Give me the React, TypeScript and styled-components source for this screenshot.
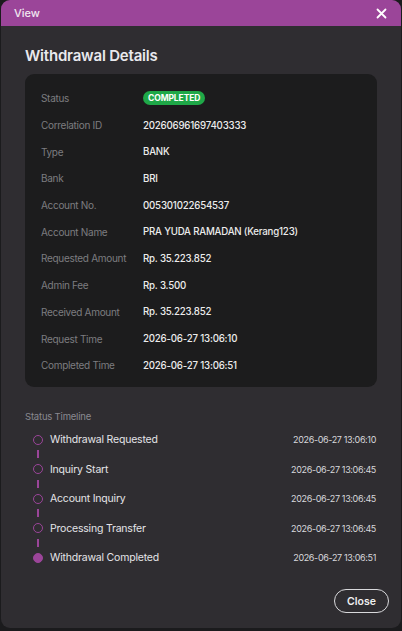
import styled, { createGlobalStyle } from 'styled-components';

const GlobalStyle = createGlobalStyle`
  html, body {
    margin: 0;
    padding: 0;
    background: #1b1b1d;
    font-family: Inter, "Noto Sans", sans-serif;
  }
  * { box-sizing: border-box; }
`;

const details: [string, string][] = [
  ['Correlation ID', '202606961697403333'],
  ['Type', 'BANK'],
  ['Bank', 'BRI'],
  ['Account No.', '005301022654537'],
  ['Account Name', 'PRA YUDA RAMADAN (Kerang123)'],
  ['Requested Amount', 'Rp. 35.223.852'],
  ['Admin Fee', 'Rp. 3.500'],
  ['Received Amount', 'Rp. 35.223.852'],
  ['Request Time', '2026-06-27 13:06:10'],
  ['Completed Time', '2026-06-27 13:06:51'],
];

const timeline = [
  { name: 'Withdrawal Requested', time: '2026-06-27 13:06:10' },
  { name: 'Inquiry Start', time: '2026-06-27 13:06:45' },
  { name: 'Account Inquiry', time: '2026-06-27 13:06:45' },
  { name: 'Processing Transfer', time: '2026-06-27 13:06:45' },
  { name: 'Withdrawal Completed', time: '2026-06-27 13:06:51', done: true },
];

export default function App() {
  return (
    <>
      <GlobalStyle />
      <Modal>
        <Header>
          <HeaderTitle>View</HeaderTitle>
          <CloseX aria-label="close">
            <svg width="11" height="11" viewBox="0 0 11 11">
              <path d="M1.5 1.5 L9.5 9.5 M9.5 1.5 L1.5 9.5" stroke="#fff" strokeWidth="1.8" strokeLinecap="round" />
            </svg>
          </CloseX>
        </Header>
        <Body>
          <Title>Withdrawal Details</Title>
          <Card>
            <Row>
              <Label>Status</Label>
              <Badge>COMPLETED</Badge>
            </Row>
            {details.map(([k, v]) => (
              <Row key={k}>
                <Label>{k}</Label>
                <Value>{v}</Value>
              </Row>
            ))}
          </Card>
          <SectionLabel>Status Timeline</SectionLabel>
          <Timeline>
            {timeline.map((t, i) => (
              <Step key={t.name}>
                <StepRow>
                  <Dot $filled={!!t.done} />
                  <StepName>{t.name}</StepName>
                  <StepTime>{t.time}</StepTime>
                </StepRow>
                {i < timeline.length - 1 && <Connector />}
              </Step>
            ))}
          </Timeline>
          <Footer>
            <CloseButton>Close</CloseButton>
          </Footer>
        </Body>
      </Modal>
    </>
  );
}

const Modal = styled.div`
  width: 400px;
  height: 628px;
  margin-left: 1px;
  background: #2f2d31;
  border-radius: 9px;
  overflow: hidden;
  display: flex;
  flex-direction: column;
`;

const Header = styled.div`
  height: 26px;
  background: #9b4599;
  display: flex;
  align-items: center;
  justify-content: space-between;
  padding: 0 14px 0 13px;
`;

const HeaderTitle = styled.span`
  color: #f1e6f0;
  font-size: 11px;
  font-weight: 500;
`;

const CloseX = styled.button`
  background: none;
  border: none;
  padding: 0;
  display: flex;
  cursor: pointer;
`;

const Body = styled.div`
  flex: 1;
  padding: 20px 24px 15px 24px;
  display: flex;
  flex-direction: column;
`;

const Title = styled.h2`
  margin: 0 0 9px 0;
  color: #e9e9ee;
  font-size: 15px;
  font-weight: 600;
  letter-spacing: -0.2px;
`;

const Card = styled.div`
  background: #1c1c1d;
  border-radius: 9px;
  padding: 11px 16px 8px 16px;
  width: 352px;
`;

const Row = styled.div`
  display: flex;
  align-items: center;
  height: 26.7px;
`;

const Label = styled.span`
  width: 102px;
  color: #7d7d80;
  font-size: 10px;
  letter-spacing: -0.3px;
`;

const Value = styled.span`
  color: #ececec;
  font-size: 9.7px;
  font-weight: 500;
  letter-spacing: -0.2px;
`;

const Badge = styled.span`
  background: #1fa848;
  color: #ffffff;
  font-size: 8.5px;
  font-weight: 700;
  padding: 2px 5px;
  border-radius: 7px;
  letter-spacing: -0.1px;
`;

const SectionLabel = styled.div`
  margin: 24px 0 0 0;
  color: #8a8990;
  font-size: 9.5px;
  letter-spacing: -0.2px;
`;

const Timeline = styled.div`
  margin: 12px 0 0 8px;
  display: flex;
  flex-direction: column;
`;

const Step = styled.div`
  display: flex;
  flex-direction: column;
`;

const StepRow = styled.div`
  display: flex;
  align-items: center;
  height: 12px;
`;

const Dot = styled.span<{ $filled: boolean }>`
  width: 10px;
  height: 10px;
  border-radius: 50%;
  border: 1.3px solid #9b4599;
  background: ${p => (p.$filled ? '#9b4599' : 'transparent')};
  flex: none;
`;

const StepName = styled.span`
  margin-left: 7px;
  flex: 1;
  color: #e4e4e8;
  font-size: 10.5px;
  letter-spacing: -0.2px;
`;

const StepTime = styled.span`
  color: #d8d8dc;
  font-size: 9px;
  letter-spacing: -0.35px;
  margin-right: 1px;
`;

const Connector = styled.span`
  width: 2px;
  height: 8px;
  margin: 4.5px 0 5px 4px;
  background: #9b4599;
`;

const Footer = styled.div`
  margin-top: auto;
  display: flex;
  justify-content: flex-end;
`;

const CloseButton = styled.button`
  width: 55px;
  height: 24px;
  margin-right: -12px;
  background: transparent;
  border: 1px solid #d9d9dc;
  border-radius: 12px;
  color: #f0f0f0;
  font-family: inherit;
  font-size: 10.5px;
  font-weight: 600;
  cursor: pointer;
`;
